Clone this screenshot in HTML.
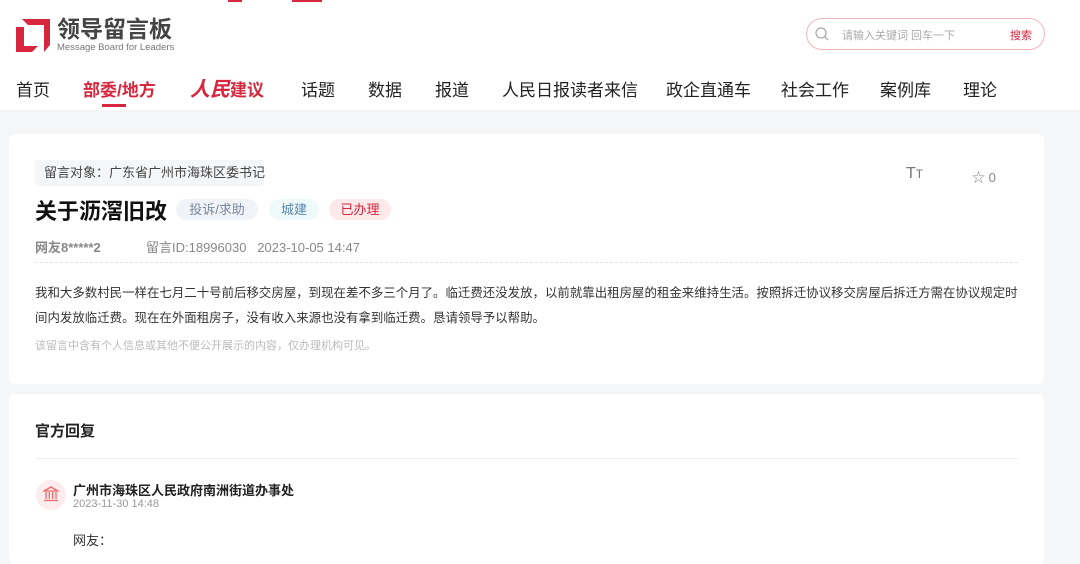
<!DOCTYPE html>
<html><head><meta charset="utf-8"><style>
*{margin:0;padding:0;box-sizing:border-box}
body{width:1080px;height:550px;overflow:hidden;background:#f5f6f8;font-family:"Liberation Sans","Noto Sans CJK SC",sans-serif;color:#333;position:relative}
.hdr{position:absolute;left:0;top:0;width:1080px;height:110px;background:#fff}
.a{position:absolute;white-space:nowrap}
.nav{top:76px;font-size:17px;color:#222}
.card{position:absolute;left:9px;width:1035px;background:#fff;border-radius:6px}
.tag{position:absolute;top:199px;height:21px;border-radius:11px;font-size:13px;line-height:21px;text-align:center}
</style></head><body>
<div class="hdr">
 <div class="a" style="left:228px;top:0;width:14px;height:2px;background:#d7263d"></div>
 <div class="a" style="left:292px;top:0;width:30px;height:2px;background:#d7263d"></div>
 <svg class="a" style="left:16px;top:19px" width="34" height="33" viewBox="0 0 34 33"><path d="M6 0H34V26L28 33V6H12Z" fill="#d7263d"/><path d="M0 8H8V27H22L16 33H0Z" fill="#d7263d"/></svg>
 <div class="a" style="left:57px;top:17px;font-size:23px;line-height:24px;font-weight:bold;color:#444">领导留言板</div>
 <div class="a" style="left:57px;top:42px;font-size:9.5px;line-height:11px;color:#777">Message Board for Leaders</div>
 <div class="a" style="left:806px;top:18px;width:239px;height:32px;border:1px solid #f5b5bb;border-radius:16px"></div>
 <svg class="a" style="left:815px;top:27px" width="14" height="14" viewBox="0 0 14 14"><circle cx="6" cy="6" r="5" fill="none" stroke="#aaa" stroke-width="1.3"/><path d="M10 10L13 13" stroke="#aaa" stroke-width="1.3"/></svg>
 <div class="a" style="left:842px;top:27px;font-size:11px;color:#aaa">请输入关键词 回车一下</div>
 <div class="a" style="left:1010px;top:27px;font-size:11px;color:#d7263d">搜索</div>
 <div class="a nav" style="left:16px">首页</div>
 <div class="a nav" style="left:83px;color:#d7263d;font-weight:bold">部委/地方</div>
 <div class="a" style="left:102px;top:104px;width:24px;height:3px;background:#d7263d"></div>
 <div class="a nav" style="left:190px;top:73px;color:#d7263d;font-weight:bold;font-style:italic;font-size:20px">人民<span style="font-size:17px;font-style:normal">建议</span></div>
 <div class="a nav" style="left:301px">话题</div>
 <div class="a nav" style="left:368px">数据</div>
 <div class="a nav" style="left:435px">报道</div>
 <div class="a nav" style="left:502px">人民日报读者来信</div>
 <div class="a nav" style="left:666px">政企直通车</div>
 <div class="a nav" style="left:781px">社会工作</div>
 <div class="a nav" style="left:880px">案例库</div>
 <div class="a nav" style="left:963px">理论</div>
</div>
<div class="card" style="top:134px;height:250px"></div>
<div class="a" style="left:35px;top:160px;width:229px;height:26px;background:#f5f6f8;border-radius:3px;font-size:13px;line-height:26px;padding-left:9px;color:#444">留言对象：广东省广州市海珠区委书记</div>
<div class="a" style="left:906px;top:165px;font-size:16px;color:#777">T<span style="font-size:12px">T</span></div>
<div class="a" style="left:972px;top:167px;font-size:13px;color:#888">☆ 0</div>
<div class="a" style="left:35px;top:194px;font-size:22px;font-weight:bold;color:#111">关于沥滘旧改</div>
<div class="tag" style="left:176px;width:82px;background:#f0f3f7;color:#7a889e">投诉/求助</div>
<div class="tag" style="left:269px;width:50px;background:#eefafa;color:#5a86b0">城建</div>
<div class="tag" style="left:329px;width:62px;background:#fde8ea;color:#d7263d">已办理</div>
<div class="a" style="left:35px;top:237px;font-size:13px;color:#888;font-weight:bold">网友8*****2</div>
<div class="a" style="left:146px;top:237px;font-size:13px;color:#888">留言ID:18996030 &nbsp; 2023-10-05 14:47</div>
<div class="a" style="left:35px;top:262px;width:983px;border-top:1px dashed #e3e3e3"></div>
<div class="a" style="left:35px;top:281px;width:990px;white-space:normal;font-size:12.45px;line-height:25px;color:#333">我和大多数村民一样在七月二十号前后移交房屋，到现在差不多三个月了。临迁费还没发放，以前就靠出租房屋的租金来维持生活。按照拆迁协议移交房屋后拆迁方需在协议规定时间内发放临迁费。现在在外面租房子，没有收入来源也没有拿到临迁费。恳请领导予以帮助。</div>
<div class="a" style="left:35px;top:337px;font-size:11px;color:#bbb">该留言中含有个人信息或其他不便公开展示的内容，仅办理机构可见。</div>
<div class="card" style="top:394px;height:170px"></div>
<div class="a" style="left:35px;top:420px;font-size:15px;font-weight:bold;color:#222">官方回复</div>
<div class="a" style="left:35px;top:458px;width:983px;border-top:1px solid #eee"></div>
<div class="a" style="left:36px;top:480px;width:30px;height:30px;border-radius:50%;background:#fdeced"></div>
<svg class="a" style="left:43px;top:486px" width="16" height="16" viewBox="0 0 16 16" fill="none" stroke="#e66" stroke-width="1.3"><path d="M1 5L8 1L15 5Z M3 6V13 M6.3 6V13 M9.7 6V13 M13 6V13 M1 14.5H15"/></svg>
<div class="a" style="left:73px;top:480px;font-size:13px;font-weight:bold;color:#222">广州市海珠区人民政府南洲街道办事处</div>
<div class="a" style="left:73px;top:498px;font-size:11px;color:#999">2023-11-30 14:48</div>
<div class="a" style="left:73px;top:530px;font-size:13px;color:#333">网友：</div>
</body></html>
